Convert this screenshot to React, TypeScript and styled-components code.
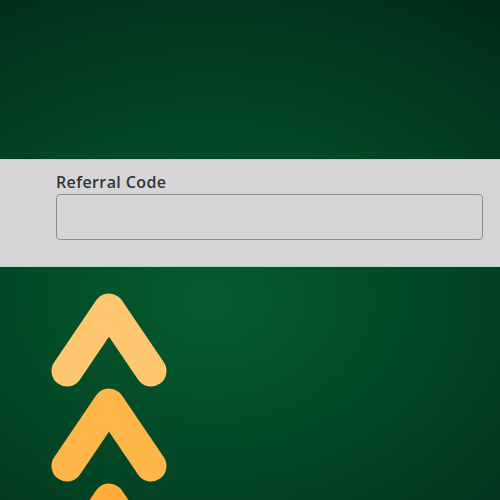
import React from "react";
import styled, { createGlobalStyle } from "styled-components";

const Global = createGlobalStyle`
  html, body { margin: 0; padding: 0; }
  body { width: 500px; height: 500px; overflow: hidden; }
`;

const Page = styled.div`
  width: 500px;
  height: 500px;
  display: flex;
  flex-direction: column;
  background-color: #012a19;
  background-image: radial-gradient(
    ellipse 480px 360px at 210px 300px,
    #065c2f 0%,
    #044c28 35%,
    #023c20 70%,
    #012c1a 100%
  );
  font-family: "Open Sans", "Liberation Sans", sans-serif;
`;

const Spacer = styled.div`
  height: 159px;
  flex: none;
`;

const Band = styled.section`
  flex: none;
  height: 108px;
  box-sizing: border-box;
  background: #d7d5d7;
  border-top: 1px solid #a9d8c2;
  border-bottom: 1px solid #a9d8c2;
  padding: 11px 17px 0 56px;
  display: flex;
  flex-direction: column;
  gap: 1px;
`;

const Label = styled.label`
  font-size: 16px;
  font-weight: 600;
  letter-spacing: 0.4px;
  color: #333436;
  line-height: 22px;
`;

const Input = styled.div`
  height: 44px;
  border: 1.5px solid #8e8d8f;
  border-radius: 4px;
  background: #d7d5d7;
`;

const Arrows = styled.svg`
  flex: none;
  margin-left: 40px;
  display: block;
`;

const chevrons = [
  { dy: 0, color: "#ffc670" },
  { dy: 95, color: "#ffb648" },
  { dy: 190, color: "#ffac38" },
];

export default function App() {
  return (
    <>
      <Global />
      <Page>
        <Spacer />
        <Band>
          <Label>Referral Code</Label>
          <Input />
        </Band>
        <Arrows width="140" height="233" viewBox="0 0 140 233">
          {chevrons.map((c, i) => (
            <polyline
              key={i}
              points={`27,${104 + c.dy} 69,${42 + c.dy} 111,${104 + c.dy}`}
              fill="none"
              stroke={c.color}
              strokeWidth="31"
              strokeLinecap="round"
              strokeLinejoin="round"
            />
          ))}
        </Arrows>
      </Page>
    </>
  );
}
